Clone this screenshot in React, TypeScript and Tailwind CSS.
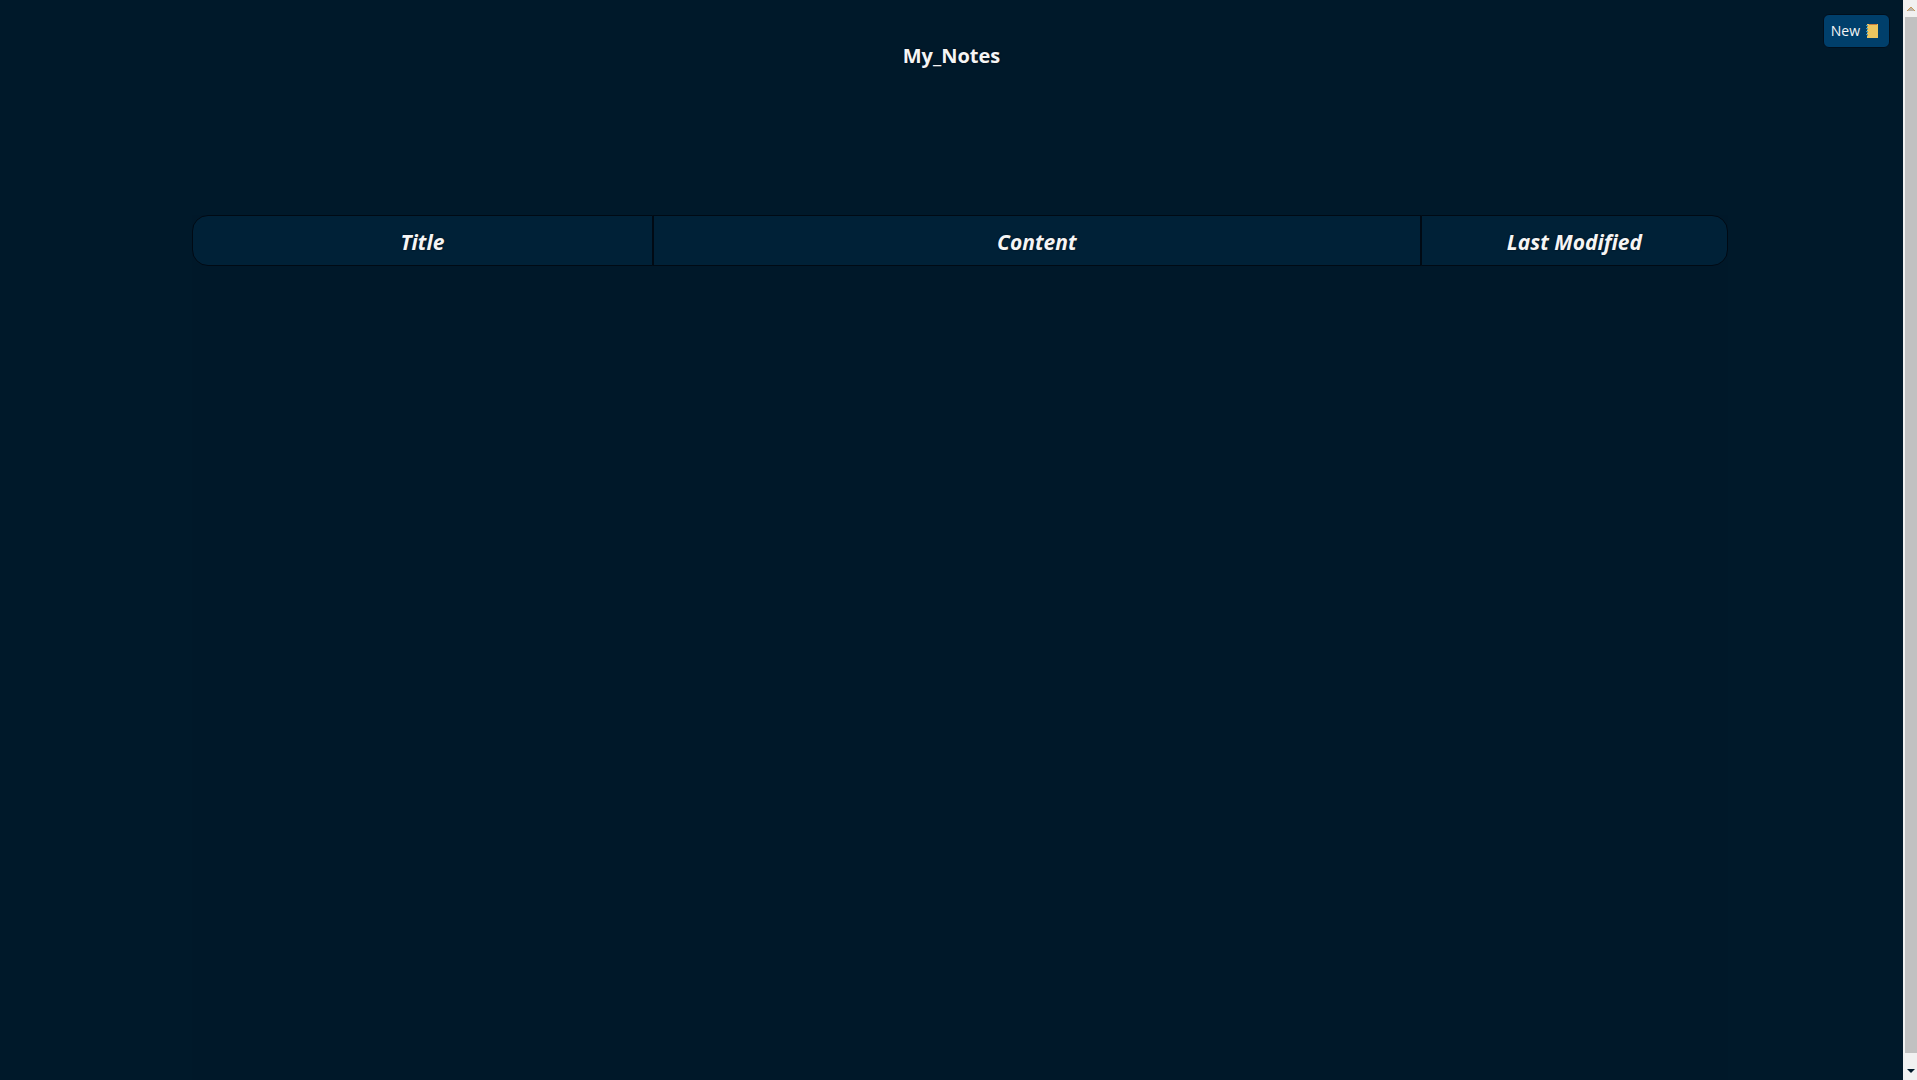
const columns = [
  { label: 'Title', className: 'w-[30%] rounded-l-2xl border-l' },
  { label: 'Content', className: 'w-[50%] border-l' },
  { label: 'Last Modified', className: 'w-[20%] rounded-r-2xl border-l' },
]

function NotebookIcon() {
  return (
    <svg className="h-4 w-3" viewBox="0 0 12 16" shapeRendering="crispEdges" aria-hidden="true">
      <rect x="1" y="1" width="11" height="14" fill="#ecc65f" />
      <rect x="3" y="1" width="8" height="1" fill="#c97c3a" />
      <path d="M0 2h2v1H0zM0 5h2v1H0zM0 8h2v1H0zM0 11h2v1H0z" fill="#3f9cc4" />
      <path d="M1 3h1v1H1zM1 6h1v1H1zM1 9h1v1H1zM1 12h1v1H1z" fill="#8a8f6c" />
    </svg>
  )
}

function Scrollbar() {
  return (
    <div className="flex w-3.5 shrink-0 flex-col items-center bg-[#f1f1f1] pl-0.5" aria-hidden="true">
      <svg className="h-[17px] w-3" viewBox="0 0 12 17">
        <path d="M2 11 L6 7 L10 11 Z" fill="#bcb5ac" />
        <path d="M2 11 L6 7 L10 11" fill="none" stroke="#c79a5c" strokeWidth="1" />
      </svg>
      <div className="w-full flex-1 bg-[#c1c1c1]" />
      <svg className="h-[27px] w-3" viewBox="0 0 12 27">
        <path d="M2 16 L6 20 L10 16 Z" fill="#001829" />
      </svg>
    </div>
  )
}

function NotesTable() {
  return (
    <div className="mr-[175px] ml-48 flex-1 bg-[#001829]">
      <table className="w-full table-fixed border-separate border-spacing-0">
        <thead>
          <tr>
            {columns.map((column) => (
              <th
                key={column.label}
                scope="col"
                className={`${column.className} h-[51px] border-y border-r border-[#000a14] bg-[#002137] p-0 pt-1 text-[21px] font-bold italic text-shadow-[0_0_2px_#000a14]`}
              >
                {column.label}
              </th>
            ))}
          </tr>
        </thead>
        <tbody />
      </table>
    </div>
  )
}

export default function App() {
  return (
    <div className="flex min-h-screen bg-[#00192a] font-['Open_Sans','Noto_Sans',sans-serif] text-[#f5f5f5]">
      <main className="flex min-w-0 flex-1 flex-col">
        <header className="grid h-[215px] grid-cols-[1fr_auto_1fr] items-start">
          <h1 className="col-start-2 pt-[42px] text-xl font-bold text-shadow-[0_0_2px_#000a14]">My_Notes</h1>
          <button
            type="button"
            className="mt-3.5 mr-[13px] flex h-[34px] items-center gap-1.5 justify-self-end rounded-md border border-[#000f1d] bg-[#003f6b] pr-[11px] pl-[7px] text-sm"
          >
            New
            <NotebookIcon />
          </button>
        </header>
        <NotesTable />
      </main>
      <Scrollbar />
    </div>
  )
}
